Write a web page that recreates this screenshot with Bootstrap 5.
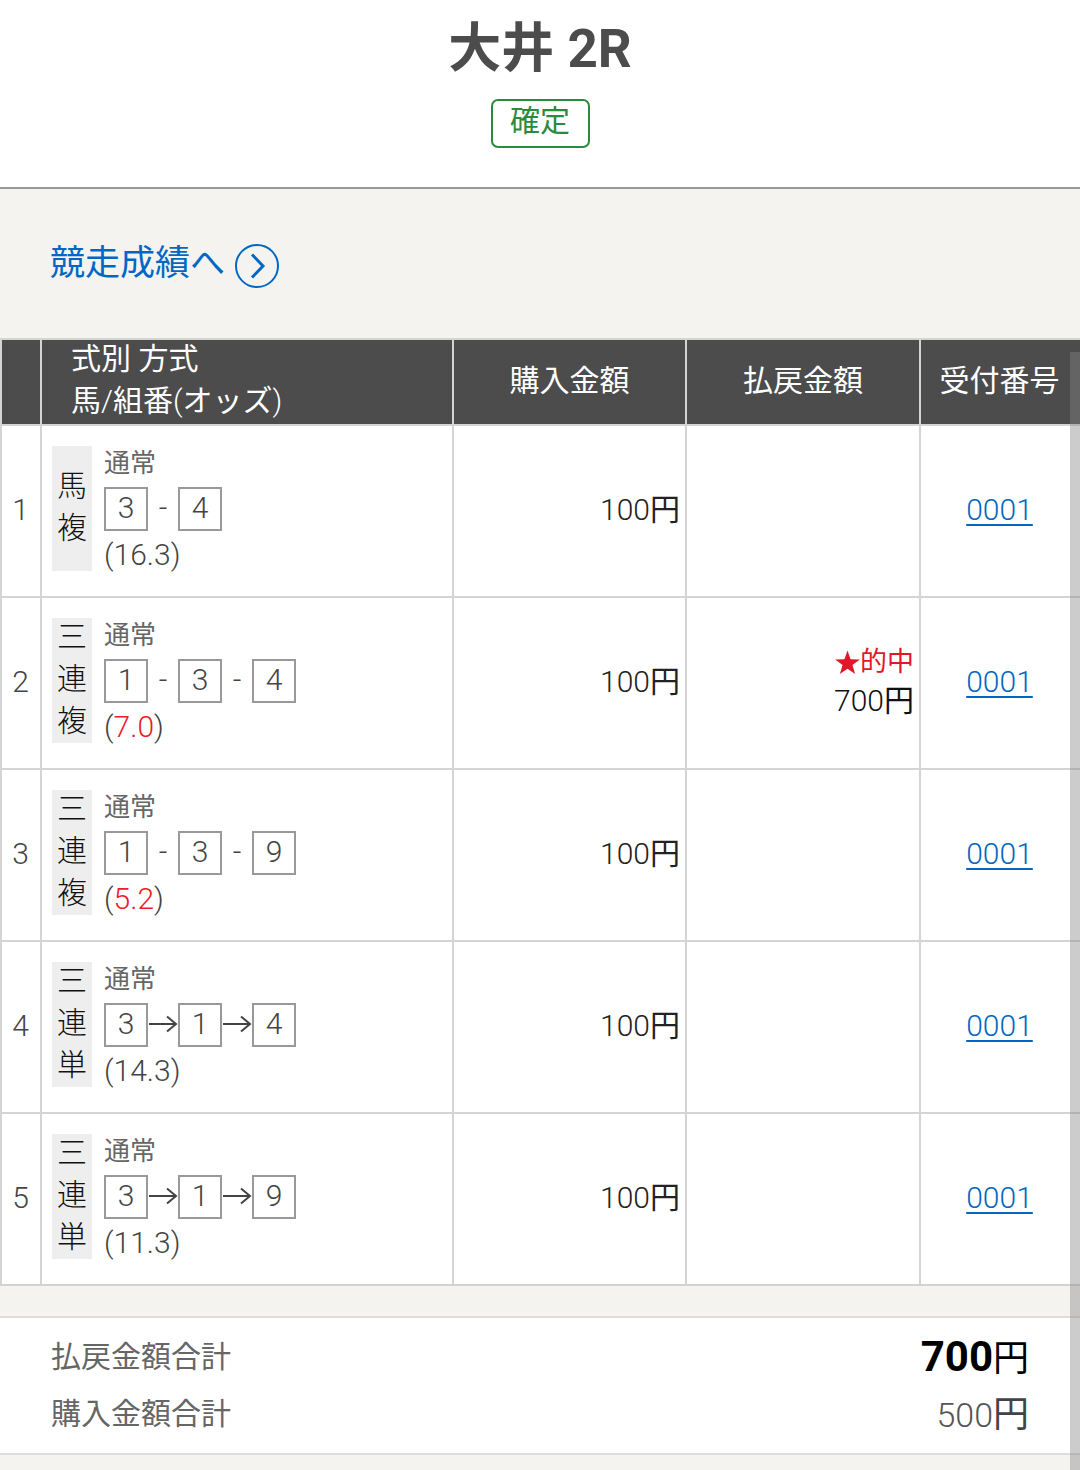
<!DOCTYPE html>
<html lang="ja">
<head>
<meta charset="utf-8">
<title>大井 2R</title>
<link href="https://cdn.jsdelivr.net/npm/bootstrap@5.3.0/dist/css/bootstrap.min.css" rel="stylesheet">
<style>
html,body{margin:0;height:1470px;overflow:hidden}
body{background:#f4f3f0;color:#444;font-family:Roboto,"Noto Sans CJK JP",sans-serif;font-weight:300;font-size:30px;line-height:42px;position:relative}
.top-head{background:#fff;height:189px;border-bottom:2px solid #999;padding-top:19px}
.race-title{font-size:53px;line-height:60px;font-weight:700;color:#4c4c4c;margin:0}
.state-tag{display:inline-block;width:99px;height:49px;border:2px solid #2a8a3e;border-radius:7px;color:#2a8a3e;font-size:30px;line-height:40px;margin-top:20px;font-weight:400}
.link-row{height:149px;padding:54px 0 0 50px}
.result-link{font-size:35px;line-height:42px;color:#0068c4;text-decoration:none;font-weight:400}
.result-link svg{vertical-align:-13px;margin-left:10px}
.jp{font-weight:400}
.table.bet-table{table-layout:fixed;width:1080px;margin:0;border-collapse:collapse;--bs-table-bg:#fff;--bs-table-border-color:#d4d4d4}
.table.bet-table>*>*{border:0}
.table.bet-table>*>*>*{border:2px solid #d4d4d4;padding:0;vertical-align:middle;font-size:30px;line-height:42px;font-weight:300;color:#222;background:#fff;box-shadow:none}
.table.bet-table>thead>tr>th{background:#4c4c4c;color:#fff;height:86px;text-align:center;font-weight:400;padding-bottom:2px}
.table.bet-table>thead>tr>th.head-left{text-align:left;padding-left:29px;font-weight:300}
.table.bet-table>thead>tr>th.head-last{padding-right:2px}
.head-stack{margin-top:-2px}
.table.bet-table>tbody>tr>td{height:172px;padding-bottom:2px}
.table.bet-table>tbody>tr>td.idx-cell{text-align:center;padding-right:1px;color:#444}
.table.bet-table>tbody>tr>td.num-cell{text-align:center;padding-right:2px}
.table.bet-table>tbody>tr>td.pad-end{text-align:right;padding-right:5px}
.bet-wrap{display:flex;gap:12px;padding:0 10px}
.kind-col{width:40px;height:125px;padding-bottom:4px;background:#eee;display:flex;flex-direction:column;justify-content:center;text-align:center;color:#111;font-weight:300}
.plan{font-size:26px;line-height:34px;color:#666;height:41px;font-weight:400}
.picks{display:flex;height:44px;align-items:center}
.horse{width:44px;height:44px;border:2px solid #999;text-align:center;line-height:38px;color:#444}
.sep{width:30px;text-align:center;line-height:42px;height:44px;color:#444}
.sep svg{display:block;margin-top:11px}
.odds{line-height:42px;margin-top:3px;height:40px;color:#444}
.odds-hit{color:#ee1c25}
.hit-wrap{margin-bottom:2px}
.hit-mark{color:#e0182a;font-size:27px;height:40px;padding-top:2px;line-height:38px;font-weight:400;display:flex;justify-content:flex-end;align-items:center}
.hit-amount{color:#111;line-height:40px}
.no-link{color:#0068c4;text-decoration-thickness:2px;text-underline-offset:4px}
.sum-box{margin-top:30px;background:#fff;border-top:2px solid #ddd;border-bottom:2px solid #ddd;height:139px;padding:10px 51px 0 51px}
.sum-row{display:flex;justify-content:space-between;align-items:center;height:57px;color:#666;font-weight:400}
.sum-big{font-size:36px;color:#000;line-height:44px;margin-top:2px}
.sum-big b{font-size:42px;font-weight:700}
.sum-plain{font-size:34px;color:#555;line-height:44px;margin-top:2px;font-weight:300}
.sum-plain .jp{font-size:36px;color:#444}
.scroll-thumb{position:absolute;left:1070px;top:352px;width:10px;height:1118px;background:rgba(133,133,133,.42)}
</style>
</head>
<body>
<header class="top-head text-center">
  <h1 class="race-title">大井 2R</h1>
  <span class="state-tag">確定</span>
</header>
<div class="link-row">
  <a class="result-link" href="#">競走成績へ<svg width="44" height="44" viewBox="0 0 44 44"><circle cx="22" cy="22" r="21" fill="none" stroke="#0068c4" stroke-width="2"/><path d="M17 10.5 L28 22 L17 33.5" fill="none" stroke="#0068c4" stroke-width="3"/></svg></a>
</div>
<table class="table table-bordered bet-table">
  <colgroup><col style="width:40px"><col style="width:412px"><col style="width:233px"><col style="width:234px"><col style="width:161px"></colgroup>
  <thead><tr><th></th><th class="head-left"><div class="head-stack"><span class="jp">式別 方式</span><br><span class="jp">馬</span>/<span class="jp">組番</span>(<span class="jp">オッズ</span>)</div></th><th>購入金額</th><th>払戻金額</th><th class="head-last">受付番号</th></tr></thead>
  <tbody>
    <tr><td class="idx-cell">1</td><td><div class="bet-wrap"><div class="kind-col"><span>馬</span><span>複</span></div><div><div class="plan">通常</div><div class="picks"><div class="horse">3</div><div class="sep">-</div><div class="horse">4</div></div><div class="odds">(16.3)</div></div></div></td><td class="pad-end">100<span class="jp">円</span></td><td class="pad-end"></td><td class="num-cell"><a class="no-link" href="#">0001</a></td></tr>
    <tr><td class="idx-cell">2</td><td><div class="bet-wrap"><div class="kind-col"><span>三</span><span>連</span><span>複</span></div><div><div class="plan">通常</div><div class="picks"><div class="horse">1</div><div class="sep">-</div><div class="horse">3</div><div class="sep">-</div><div class="horse">4</div></div><div class="odds">(<span class="odds-hit">7.0</span>)</div></div></div></td><td class="pad-end">100<span class="jp">円</span></td><td class="pad-end"><div class="hit-wrap"><div class="hit-mark"><svg width="25" height="25" viewBox="0 0 25 25"><path fill="#e0182a" d="M12.5 .5L15.56 9.29 24.86 9.48 17.45 15.11 20.14 24.02 12.500 18.7 4.86 24.02 7.55 15.11 .14 9.48 9.44 9.29z"/></svg><span>的中</span></div><div class="hit-amount">700<span class="jp">円</span></div></div></td><td class="num-cell"><a class="no-link" href="#">0001</a></td></tr>
    <tr><td class="idx-cell">3</td><td><div class="bet-wrap"><div class="kind-col"><span>三</span><span>連</span><span>複</span></div><div><div class="plan">通常</div><div class="picks"><div class="horse">1</div><div class="sep">-</div><div class="horse">3</div><div class="sep">-</div><div class="horse">9</div></div><div class="odds">(<span class="odds-hit">5.2</span>)</div></div></div></td><td class="pad-end">100<span class="jp">円</span></td><td class="pad-end"></td><td class="num-cell"><a class="no-link" href="#">0001</a></td></tr>
    <tr><td class="idx-cell">4</td><td><div class="bet-wrap"><div class="kind-col"><span>三</span><span>連</span><span>単</span></div><div><div class="plan">通常</div><div class="picks"><div class="horse">3</div><div class="sep"><svg width="30" height="20" viewBox="0 0 30 20"><path d="M1 10H28M19 2.5L28 10L19 17.5" fill="none" stroke="#444" stroke-width="2"/></svg></div><div class="horse">1</div><div class="sep"><svg width="30" height="20" viewBox="0 0 30 20"><path d="M1 10H28M19 2.5L28 10L19 17.5" fill="none" stroke="#444" stroke-width="2"/></svg></div><div class="horse">4</div></div><div class="odds">(14.3)</div></div></div></td><td class="pad-end">100<span class="jp">円</span></td><td class="pad-end"></td><td class="num-cell"><a class="no-link" href="#">0001</a></td></tr>
    <tr><td class="idx-cell">5</td><td><div class="bet-wrap"><div class="kind-col"><span>三</span><span>連</span><span>単</span></div><div><div class="plan">通常</div><div class="picks"><div class="horse">3</div><div class="sep"><svg width="30" height="20" viewBox="0 0 30 20"><path d="M1 10H28M19 2.5L28 10L19 17.5" fill="none" stroke="#444" stroke-width="2"/></svg></div><div class="horse">1</div><div class="sep"><svg width="30" height="20" viewBox="0 0 30 20"><path d="M1 10H28M19 2.5L28 10L19 17.5" fill="none" stroke="#444" stroke-width="2"/></svg></div><div class="horse">9</div></div><div class="odds">(11.3)</div></div></div></td><td class="pad-end">100<span class="jp">円</span></td><td class="pad-end"></td><td class="num-cell"><a class="no-link" href="#">0001</a></td></tr>
  </tbody>
</table>
<section class="sum-box">
  <div class="sum-row"><span>払戻金額合計</span><span class="sum-big"><b>700</b><span class="jp">円</span></span></div>
  <div class="sum-row"><span>購入金額合計</span><span class="sum-plain">500<span class="jp">円</span></span></div>
</section>
<div class="scroll-thumb"></div>
</body>
</html>
